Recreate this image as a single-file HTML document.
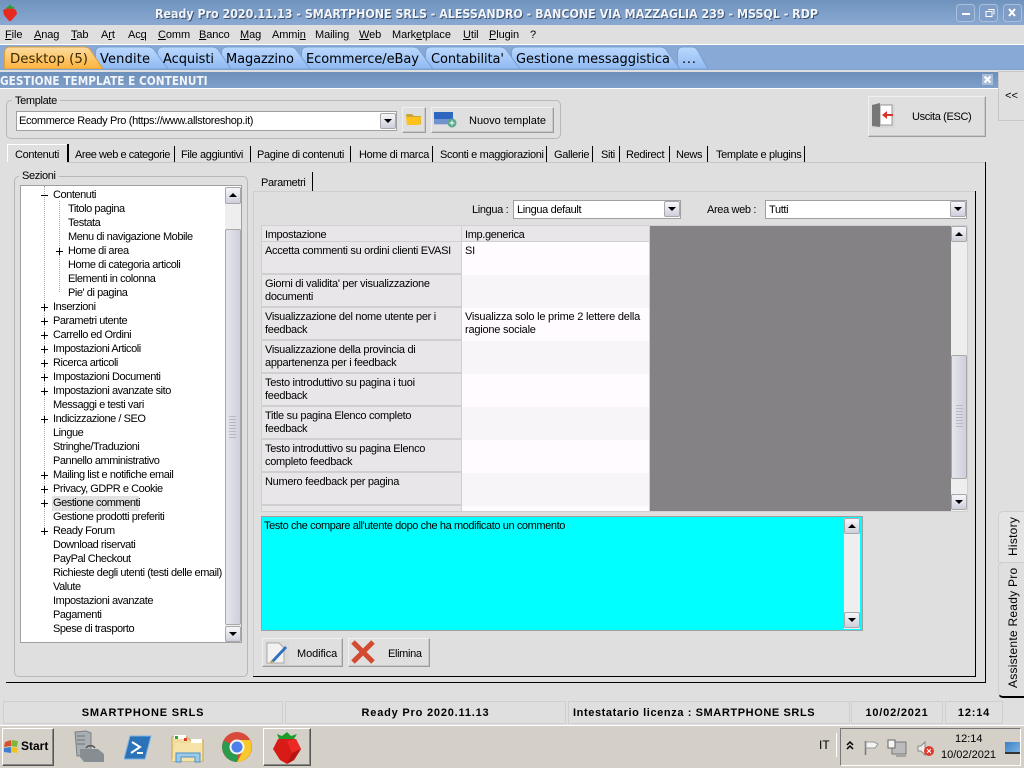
<!DOCTYPE html>
<html><head><meta charset="utf-8"><style>
html,body{margin:0;padding:0}
body{width:1024px;height:768px;overflow:hidden;position:relative;background:#dfdfdf;font:11px "Liberation Sans",sans-serif;color:#000}
div,span{position:absolute;box-sizing:border-box;white-space:nowrap}
.t{line-height:14px;letter-spacing:-.35px}
.tree .t{letter-spacing:-.45px}
.b{background:#dfdfdf;border:1px solid;border-color:#efefef #9c9c9c #9c9c9c #efefef;box-shadow:inset -1px -1px 0 #c8c8c8}
.sb{width:16px;height:16px;background:linear-gradient(#f6f6fa,#cfcfdc);border:1px solid #a8a8a8;border-radius:2px}
.up:after,.dn:after{content:"";position:absolute;left:3px;top:5px;border-left:4px solid transparent;border-right:4px solid transparent}
.up:after{border-bottom:4px solid #000}
.dn:after{border-top:4px solid #000}
.tr{background:#eee;width:16px}
.th{width:16px;background:linear-gradient(90deg,#e6e6ee,#cfcfdc);border:1px solid #a8a8a8;border-radius:2px}
.cb{background:#fff;border:1px solid #a0a0a0}
.g{border:1px solid #b8b8b8;border-radius:5px}
.l{background:#dfdfdf;padding:0 3px;line-height:12px}
.p{width:7px;height:7px}
.p:before{content:"";position:absolute;left:0;top:3px;width:7px;height:1px;background:#000}
.p.pl:after{content:"";position:absolute;left:3px;top:0;width:1px;height:7px;background:#000}
.r1{background:#e8e6e8;border-bottom:2px solid #cfcfcf;left:262px;width:199px;padding:3px 0 0 3px;white-space:normal;line-height:13px;letter-spacing:-.3px}
.r2{left:462px;width:187px;padding:3px 0 0 3px;white-space:normal;line-height:13px;letter-spacing:-.22px}
.st{top:701px;height:23px;border:1px solid #cfcfcf;font-weight:bold;line-height:22px;text-align:center;letter-spacing:.8px}
.sep{width:2px;height:17px;top:145px;background:#000;border-left:1px solid #000}
</style></head><body>

<svg style="position:absolute;left:0;top:0" width="1024" height="72" xmlns="http://www.w3.org/2000/svg">
<defs>
<linearGradient id="tb" x1="0" y1="0" x2="0" y2="1"><stop offset="0" stop-color="#6f93bd"/><stop offset="1" stop-color="#8aa9d2"/></linearGradient>
<linearGradient id="bl" x1="0" y1="0" x2="0" y2="1"><stop offset="0" stop-color="#bcd8fe"/><stop offset="1" stop-color="#8ebaf3"/></linearGradient>
<linearGradient id="or" x1="0" y1="0" x2="0" y2="1"><stop offset="0" stop-color="#fcdca0"/><stop offset="1" stop-color="#fdb23c"/></linearGradient>
</defs>
<rect width="1024" height="25" fill="url(#tb)"/>
<rect y="25" width="1024" height="19" fill="#dfdfdf"/>
<rect y="44" width="1024" height="1" fill="#fff"/>
<rect y="45" width="1024" height="25" fill="#88a8d6"/>
<g stroke="#7aa0d0" stroke-width="1">
<path fill="url(#bl)" d="M677.5 69V53Q677.5 47 683 47H692Q696 47 698 51L708 69Z"/>
<path fill="url(#bl)" d="M511.5 69V53Q511.5 47 517 47H660Q665 47 667 51L680 69Z"/>
<path fill="url(#bl)" d="M425.5 69V53Q425.5 47 431 47H500Q505 47 507 51L520 69Z"/>
<path fill="url(#bl)" d="M301.5 69V53Q301.5 47 307 47H413Q418 47 420 51L433 69Z"/>
<path fill="url(#bl)" d="M221.5 69V53Q221.5 47 227 47H290Q295 47 297 51L310 69Z"/>
<path fill="url(#bl)" d="M157.5 69V53Q157.5 47 163 47H212Q217 47 219 51L231 69Z"/>
<path fill="url(#bl)" d="M95.5 69V53Q95.5 47 101 47H148Q153 47 155 51L168 69Z"/>
<path fill="url(#or)" stroke="#d8a040" d="M4.5 69V53Q4.5 47 10 47H84Q89 47 91 51L103 69Z"/>
</g>
<rect y="69" width="1024" height="1" fill="#7ea2d2"/>
<g font-family="DejaVu Sans,sans-serif" font-size="13" fill="#000">
<text x="10" y="63" textLength="78" lengthAdjust="spacingAndGlyphs" fill="#3a2a00">Desktop (5)</text>
<text x="100" y="63" textLength="50">Vendite</text>
<text x="163" y="63" textLength="51">Acquisti</text>
<text x="226" y="63" textLength="68">Magazzino</text>
<text x="306" y="63" textLength="113">Ecommerce/eBay</text>
<text x="431" y="63" textLength="73">Contabilita'</text>
<text x="516" y="63" textLength="154">Gestione messaggistica</text>
<text x="682" y="63" textLength="14">...</text>
</g>
<g font-family="DejaVu Sans,sans-serif" font-size="12" font-weight="bold">
<text x="156" y="19" textLength="663" lengthAdjust="spacingAndGlyphs" fill="#3c5272">Ready Pro 2020.11.13 - SMARTPHONE SRLS - ALESSANDRO - BANCONE VIA MAZZAGLIA 239 - MSSQL - RDP</text>
<text x="155" y="18" textLength="663" lengthAdjust="spacingAndGlyphs" fill="#f2f4f8">Ready Pro 2020.11.13 - SMARTPHONE SRLS - ALESSANDRO - BANCONE VIA MAZZAGLIA 239 - MSSQL - RDP</text>
</g>
<!-- strawberry -->
<path d="M3 10L10 7L16 10L17 14L11 21L9 21L4 15Z" fill="#e62a20"/>
<path d="M6 8L9 6L10 4L11 6L15 8L10 9Z" fill="#2f9a30"/>
<!-- window buttons -->
<g fill="#7f9dc6" stroke="#a9c0dc"><rect x="956.5" y="4.5" width="18" height="17" rx="3"/><rect x="979.5" y="4.5" width="18" height="17" rx="3"/><rect x="1003.5" y="4.5" width="18" height="17" rx="3"/></g>
<rect x="962" y="13" width="8" height="2" fill="#fff"/>
<path d="M986 11.5h6v5h-6zM988 9.5h6v5" fill="none" stroke="#fff"/>
<path d="M1009 9l6 7M1015 9l-6 7" stroke="#fff" stroke-width="2"/>
</svg>

<div class="t" style="left:0;top:28px;width:600px;height:14px;letter-spacing:-.1px">
<span style="left:5px"><u>F</u>ile</span><span style="left:34px"><u>A</u>nag</span><span style="left:71px"><u>T</u>ab</span><span style="left:101px">A<u>r</u>t</span><span style="left:128px">Ac<u>q</u></span><span style="left:158px"><u>C</u>omm</span><span style="left:199px"><u>B</u>anco</span><span style="left:240px"><u>M</u>ag</span><span style="left:272px">Ammi<u>n</u></span><span style="left:315px">Mailin<u>g</u></span><span style="left:359px"><u>W</u>eb</span><span style="left:392px">Mark<u>e</u>tplace</span><span style="left:463px"><u>U</u>til</span><span style="left:489px"><u>P</u>lugin</span><span style="left:530px">?</span>
</div>

<!-- caption -->
<div style="left:0;top:72px;width:998px;height:17px;background:linear-gradient(#6c90bb,#7f9fc9);border-bottom:1px solid #fff"></div>
<div style="left:0;top:74px;color:#f2f4f8;font:bold 12px/14px 'DejaVu Sans',sans-serif;width:208px;transform-origin:0 0;transform:scaleX(.88)">GESTIONE TEMPLATE E CONTENUTI</div>
<svg style="position:absolute;left:982px;top:74px" width="12" height="12"><rect width="11" height="11" fill="#a9bddb"/><path d="M2.500 2.500l6 6M8.500 2.500l-6 6" stroke="#fff" stroke-width="2"/></svg>
<div style="left:998px;top:71px;width:26px;height:50px;border:1px solid #c8c8c8;border-right:0;line-height:48px;text-align:center;font-size:11px">&lt;&lt;</div>

<!-- template group -->
<div class="g" style="left:6px;top:100px;width:555px;height:39px"></div>
<div class="l t" style="left:12px;top:95px">Template</div>
<div class="cb t" style="left:16px;top:111px;width:381px;height:20px;padding:2px 0 0 2px">Ecommerce Ready Pro (https://www.allstoreshop.it)</div>
<div class="sb dn" style="left:380px;top:113px"></div>
<div class="b" style="left:402px;top:107px;width:24px;height:26px"></div>
<svg style="position:absolute;left:405px;top:111px" width="18" height="16"><path d="M1 3h6l2 2h7v8H2z" fill="#c9a53c"/><path d="M1 6h15l-1 8H2z" fill="#ffc21c"/></svg>
<div class="b" style="left:431px;top:107px;width:123px;height:26px"></div>
<svg style="position:absolute;left:434px;top:111px" width="26" height="18"><rect x="0" y="1" width="19" height="7" fill="#2f66c0"/><rect x="0" y="8" width="19" height="5" fill="#6f93cf"/><rect x="0" y="13" width="19" height="1" fill="#c9c0e0"/><circle cx="18" cy="12" r="4.500" fill="#5aa78c"/><path d="M15.500 12h5M18 9.500v5" stroke="#fff"/></svg>
<div class="t" style="left:469px;top:114px;letter-spacing:0">Nuovo template</div>

<!-- uscita -->
<div class="b" style="left:868px;top:96px;width:118px;height:41px"></div>
<svg style="position:absolute;left:872px;top:102px" width="24" height="26"><rect x="0" y="2" width="23" height="24" fill="#d8d8d8"/><rect x="8" y="3" width="12" height="20" fill="#fff" stroke="#999"/><path d="M0 3l8-2v24l-8-1z" fill="#777"/><path d="M10 13l5-4v3h6v2h-6v3z" fill="#d8342a"/></svg>
<div class="t" style="left:912px;top:110px">Uscita (ESC)</div>

<!-- tabs -->
<div class="t" style="left:15px;top:148px">Contenuti</div>
<div class="t" style="left:75px;top:148px;letter-spacing:-.45px">Aree web e categorie</div>
<div class="t" style="left:181px;top:148px">File aggiuntivi</div>
<div class="t" style="left:257px;top:148px">Pagine di contenuti</div>
<div class="t" style="left:359px;top:148px">Home di marca</div>
<div class="t" style="left:440px;top:148px">Sconti e maggiorazioni</div>
<div class="t" style="left:554px;top:148px">Gallerie</div>
<div class="t" style="left:601px;top:148px">Siti</div>
<div class="t" style="left:626px;top:148px">Redirect</div>
<div class="t" style="left:676px;top:148px">News</div>
<div class="t" style="left:716px;top:148px">Template e plugins</div>
<div style="left:7px;top:144px;width:60px;height:1px;background:#fff"></div>
<div style="left:7px;top:144px;width:1px;height:18px;background:#fff"></div>
<div class="sep" style="left:67px;top:144px;height:19px"></div>
<div class="sep" style="left:174px;top:146px;width:1px;height:16px"></div>
<div class="sep" style="left:250px;top:146px;width:1px;height:16px"></div>
<div class="sep" style="left:350px;top:146px;width:1px;height:16px"></div>
<div class="sep" style="left:432px;top:146px;width:1px;height:16px"></div>
<div class="sep" style="left:546px;top:146px;width:1px;height:16px"></div>
<div class="sep" style="left:592px;top:146px;width:1px;height:16px"></div>
<div class="sep" style="left:619px;top:146px;width:1px;height:16px"></div>
<div class="sep" style="left:669px;top:146px;width:1px;height:16px"></div>
<div class="sep" style="left:707px;top:146px;width:1px;height:16px"></div>
<div class="sep" style="left:804px;top:146px;width:1px;height:16px"></div>
<div style="left:67px;top:162px;width:918px;height:1px;background:#c8c8c8"></div>
<div style="left:985px;top:162px;width:1px;height:521px;background:#000"></div>
<div style="left:6px;top:682px;width:980px;height:1px;background:#000"></div>

<!-- sezioni -->
<div class="g" style="left:14px;top:176px;width:234px;height:501px"></div>
<div class="l t" style="left:19px;top:170px">Sezioni</div>
<div style="left:20px;top:185px;width:222px;height:458px;background:#fff;border:1px solid #a0a0a0"></div>
<div style="left:44px;top:186px;height:344px;width:0;border-left:1px dotted #aaa"></div>
<div style="left:59px;top:201px;height:91px;width:0;border-left:1px dotted #aaa"></div>
<div class="tree" style="left:0;top:1px;width:0;height:0">
<div style="left:52px;top:495px;width:87px;height:15px;background:#e2e2e2"></div>
<div class="t" style="left:53px;top:187px">Contenuti</div><span class="p" style="left:41px;top:191px"></span>
<div class="t" style="left:68px;top:201px">Titolo pagina</div>
<div class="t" style="left:68px;top:215px">Testata</div>
<div class="t" style="left:68px;top:229px">Menu di navigazione Mobile</div>
<div class="t" style="left:68px;top:243px">Home di area</div><span class="p pl" style="left:56px;top:247px"></span>
<div class="t" style="left:68px;top:257px">Home di categoria articoli</div>
<div class="t" style="left:68px;top:271px">Elementi in colonna</div>
<div class="t" style="left:68px;top:285px">Pie' di pagina</div>
<div class="t" style="left:53px;top:299px">Inserzioni</div><span class="p pl" style="left:41px;top:303px"></span>
<div class="t" style="left:53px;top:313px">Parametri utente</div><span class="p pl" style="left:41px;top:317px"></span>
<div class="t" style="left:53px;top:327px">Carrello ed Ordini</div><span class="p pl" style="left:41px;top:331px"></span>
<div class="t" style="left:53px;top:341px">Impostazioni Articoli</div><span class="p pl" style="left:41px;top:345px"></span>
<div class="t" style="left:53px;top:355px">Ricerca articoli</div><span class="p pl" style="left:41px;top:359px"></span>
<div class="t" style="left:53px;top:369px">Impostazioni Documenti</div><span class="p pl" style="left:41px;top:373px"></span>
<div class="t" style="left:53px;top:383px">Impostazioni avanzate sito</div><span class="p pl" style="left:41px;top:387px"></span>
<div class="t" style="left:53px;top:397px">Messaggi e testi vari</div>
<div class="t" style="left:53px;top:411px">Indicizzazione / SEO</div><span class="p pl" style="left:41px;top:415px"></span>
<div class="t" style="left:53px;top:425px">Lingue</div>
<div class="t" style="left:53px;top:439px">Stringhe/Traduzioni</div>
<div class="t" style="left:53px;top:453px">Pannello amministrativo</div>
<div class="t" style="left:53px;top:467px">Mailing list e notifiche email</div><span class="p pl" style="left:41px;top:471px"></span>
<div class="t" style="left:53px;top:481px">Privacy, GDPR e Cookie</div><span class="p pl" style="left:41px;top:485px"></span>
<div class="t" style="left:53px;top:495px">Gestione commenti</div><span class="p pl" style="left:41px;top:499px"></span>
<div class="t" style="left:53px;top:509px">Gestione prodotti preferiti</div>
<div class="t" style="left:53px;top:523px">Ready Forum</div><span class="p pl" style="left:41px;top:527px"></span>
<div class="t" style="left:53px;top:537px">Download riservati</div>
<div class="t" style="left:53px;top:551px">PayPal Checkout</div>
<div class="t" style="left:53px;top:565px">Richieste degli utenti (testi delle email)</div>
<div class="t" style="left:53px;top:579px">Valute</div>
<div class="t" style="left:53px;top:593px">Impostazioni avanzate</div>
<div class="t" style="left:53px;top:607px">Pagamenti</div>
<div class="t" style="left:53px;top:621px">Spese di trasporto</div>
</div>
<div class="tr" style="left:225px;top:187px;height:455px"></div>
<div class="sb up" style="left:225px;top:187px;height:17px"></div>
<div class="th" style="left:225px;top:229px;height:396px"></div>
<div class="sb dn" style="left:225px;top:626px"></div>

<!-- parametri -->
<div style="left:253px;top:191px;width:722px;height:1px;background:#cfcfcf"></div>
<div style="left:253px;top:191px;width:1px;height:486px;background:#cfcfcf"></div>
<div style="left:253px;top:676px;width:723px;height:1px;background:#000"></div>
<div style="left:975px;top:191px;width:1px;height:486px;background:#000"></div>
<div style="left:312px;top:172px;width:1px;height:19px;background:#000"></div>
<div class="t" style="left:261px;top:176px">Parametri</div>
<div class="t" style="left:472px;top:203px">Lingua :</div>
<div class="cb t" style="left:513px;top:200px;width:168px;height:19px;padding:2px 0 0 3px">Lingua default</div>
<div class="sb dn" style="left:664px;top:201px"></div>
<div class="t" style="left:707px;top:203px">Area web :</div>
<div class="cb t" style="left:765px;top:200px;width:202px;height:19px;padding:2px 0 0 3px">Tutti</div>
<div class="sb dn" style="left:950px;top:201px"></div>

<!-- grid -->
<div style="left:261px;top:225px;width:707px;height:287px;background:#d0d0d0"></div>
<div style="left:650px;top:226px;width:301px;height:285px;background:#858285"></div>
<div class="t" style="left:262px;top:226px;width:199px;height:15px;background:#e8e6e8;padding:2px 0 0 3px">Impostazione</div>
<div class="t" style="left:462px;top:226px;width:187px;height:15px;background:#e8e6e8;padding:2px 0 0 3px">Imp.generica</div>
<div class="r1" style="top:242px;height:33px">Accetta commenti su ordini clienti EVASI</div>
<div class="r2" style="top:242px;height:33px;background:#fffbff">SI</div>
<div class="r1" style="top:275px;height:33px">Giorni di validita' per visualizzazione<br>documenti</div>
<div class="r2" style="top:275px;height:33px;background:#f7f5f7"></div>
<div class="r1" style="top:308px;height:33px">Visualizzazione del nome utente per i<br>feedback</div>
<div class="r2" style="top:308px;height:33px;background:#fffbff">Visualizza solo le prime 2 lettere della<br>ragione sociale</div>
<div class="r1" style="top:341px;height:33px">Visualizzazione della provincia di<br>appartenenza per i feedback</div>
<div class="r2" style="top:341px;height:33px;background:#f7f5f7"></div>
<div class="r1" style="top:374px;height:33px">Testo introduttivo su pagina i tuoi<br>feedback</div>
<div class="r2" style="top:374px;height:33px;background:#fffbff"></div>
<div class="r1" style="top:407px;height:33px">Title su pagina Elenco completo<br>feedback</div>
<div class="r2" style="top:407px;height:33px;background:#f7f5f7"></div>
<div class="r1" style="top:440px;height:33px">Testo introduttivo su pagina Elenco<br>completo feedback</div>
<div class="r2" style="top:440px;height:33px;background:#fffbff"></div>
<div class="r1" style="top:473px;height:33px">Numero feedback per pagina</div>
<div class="r2" style="top:473px;height:33px;background:#f7f5f7"></div>
<div class="r1" style="top:506px;height:5px;padding:0;border:0"></div>
<div class="r2" style="top:506px;height:5px;padding:0;background:#fffbff"></div>
<div class="tr" style="left:951px;top:226px;height:285px"></div>
<div class="sb up" style="left:951px;top:226px"></div>
<div class="th" style="left:951px;top:355px;height:124px"></div>
<div class="sb dn" style="left:951px;top:494px"></div>
<div style="left:956px;top:405px;width:7px;height:22px;background:repeating-linear-gradient(#b8b8c4 0 1px,transparent 1px 3px)"></div>
<div style="left:229px;top:416px;width:7px;height:22px;background:repeating-linear-gradient(#b8b8c4 0 1px,transparent 1px 3px)"></div>

<!-- memo -->
<div style="left:261px;top:516px;width:602px;height:115px;background:#0ff;border:1px solid #a0a0a0"></div>
<div class="t" style="left:264px;top:519px;letter-spacing:-.4px">Testo che compare all'utente dopo che ha modificato un commento</div>
<div class="tr" style="left:844px;top:518px;height:111px"></div>
<div class="sb up" style="left:844px;top:518px"></div>
<div class="sb dn" style="left:844px;top:612px"></div>

<!-- buttons -->
<div class="b" style="left:262px;top:638px;width:81px;height:29px"></div>
<svg style="position:absolute;left:265px;top:641px" width="24" height="24"><rect x="0" y="0" width="24" height="24" fill="#dadada"/><path d="M2 2h12l5 5v15H2z" fill="#f2f2f2" stroke="#aaa"/><path d="M6 20L20 5l2 2L9 21z" fill="#2f6fc0"/><path d="M5 22l1-3 3 2z" fill="#c9a53c"/></svg>
<div class="t" style="left:297px;top:647px;letter-spacing:-.1px">Modifica</div>
<div class="b" style="left:348px;top:638px;width:82px;height:29px"></div>
<svg style="position:absolute;left:351px;top:640px" width="24" height="25"><path d="M2 2L22 22M22 2L2 22" stroke="#d24a30" stroke-width="5"/></svg>
<div class="t" style="left:388px;top:647px">Elimina</div>

<!-- side tabs -->
<div style="left:998px;top:511px;width:26px;height:52px;background:#e4e4e4;border:1px solid #cfcfcf;border-right:0;border-radius:5px 0 0 0"></div>
<div style="left:998px;top:562px;width:26px;height:136px;background:#dfdfdf;border:1px solid #cfcfcf;border-bottom:2px solid #000;border-right:0;border-radius:5px 0 0 5px"></div>
<div style="left:1006px;top:556px;font-size:12px;line-height:14px;letter-spacing:.25px;transform-origin:0 0;transform:rotate(-90deg)">History</div>
<div style="left:1006px;top:688px;font-size:12px;line-height:14px;letter-spacing:.25px;transform-origin:0 0;transform:rotate(-90deg)">Assistente Ready Pro</div>

<!-- status -->
<div class="st" style="left:3px;width:280px">SMARTPHONE SRLS</div>
<div class="st" style="left:285px;width:281px">Ready Pro 2020.11.13</div>
<div class="st" style="left:568px;width:282px;text-align:left;padding-left:4px;letter-spacing:.6px">Intestatario licenza : SMARTPHONE SRLS</div>
<div class="st" style="left:851px;width:92px">10/02/2021</div>
<div class="st" style="left:945px;width:58px">12:14</div>

<!-- taskbar -->
<div style="left:0;top:725px;width:1024px;height:1px;background:#fff"></div>
<div style="left:0;top:726px;width:1024px;height:42px;background:#d4d0c8"></div>
<div style="left:2px;top:728px;width:52px;height:38px;background:#d4d0c8;border:1px solid;border-color:#fff #555 #555 #fff;box-shadow:inset -1px -1px 0 #888"></div>
<svg style="position:absolute;left:4px;top:739px" width="16" height="15"><path d="M1 3l6-2v6l-7 1z" fill="#d8502c"/><path d="M8 1l6 1-1 6-6-1z" fill="#7fb63a"/><path d="M0 9l7-1v6l-7-1z" fill="#3f7fd0"/><path d="M8 8l6 1-1 5-6-1z" fill="#f2c21c"/></svg>
<div style="left:21px;top:739px;font:bold 12px/14px 'Liberation Sans',sans-serif">Start</div>
<svg style="position:absolute;left:72px;top:730px" width="32" height="34"><path d="M3 2l11-1 5 2v22l-14 1z" fill="#a9aeb3" stroke="#7b8085"/><path d="M5 6h8M5 10h8M5 14h8" stroke="#6c7176"/><path d="M8 19l18 0 6 5v8H12l-4-5z" fill="#868d93"/><path d="M14 18a5 4 0 0 1 9 0" fill="none" stroke="#555" stroke-width="1.500"/></svg>
<svg style="position:absolute;left:124px;top:735px" width="28" height="25"><path d="M6 1H27L21 24H0z" fill="#2b72b8" stroke="#7ab4e4"/><path d="M8 7l8 5-9 6M13 18h6" fill="none" stroke="#fff" stroke-width="2"/></svg>
<svg style="position:absolute;left:171px;top:733px" width="33" height="30"><path d="M1 4h15l3 3h13v21H1z" fill="#f2db9a" stroke="#c9a85a"/><rect x="3" y="2" width="12" height="4" fill="#fff"/><rect x="4" y="3" width="3" height="3" fill="#2fa32f"/><rect x="13" y="5" width="3" height="3" fill="#d83a2a"/><rect x="20" y="6" width="11" height="4" fill="#fff"/><path d="M4 10h27v18H1z" fill="#f6e3a8"/><path d="M5 20h24v9h-5v-5H10v5H5z" fill="#9ccbea" stroke="#4a92c8"/></svg>
<svg style="position:absolute;left:222px;top:732px" width="30" height="30"><circle cx="15" cy="15" r="15" fill="#d84a3a"/><path d="M15 15L2 22A15 15 0 0 0 15 30Z" fill="#2a9a4e"/><path d="M15 15L2 22A15 15 0 0 1 1.500 8.500Z" fill="#2a9a4e"/><path d="M15 8H28A15 15 0 0 1 15 30L21 19Z" fill="#f8c92a"/><circle cx="15" cy="15" r="7.500" fill="#f4f4f4"/><circle cx="15" cy="15" r="5.500" fill="#4a80ec"/></svg>
<div style="left:263px;top:728px;width:48px;height:38px;background:#d4d0c8;border:1px solid;border-color:#fff #555 #555 #fff;box-shadow:inset -1px -1px 0 #888"></div>
<svg style="position:absolute;left:272px;top:731px" width="30" height="33"><path d="M5 3l5 2 5-4 4 4 6-2-3 5H7z" fill="#1f9a2c"/><path d="M6 8H24L29 18 22 29 15 33 8 29 1 18Z" fill="#d91b18"/><path d="M15 10L24 8 29 18 20 22Z" fill="#ee2a24"/><path d="M15 33L20 22 29 18 22 29Z" fill="#b81410"/></svg>
<div style="left:819px;top:738px;font-size:12px;line-height:14px">IT</div>
<div style="left:836px;top:733px;width:1px;height:24px;background:#aaa;border-right:1px solid #fff"></div>
<div style="left:840px;top:728px;width:181px;height:38px;border:1px solid;border-color:#777 #fff #fff #777"></div>
<svg style="position:absolute;left:846px;top:738px" width="100" height="20"><path d="M1 7l3-3 3 3M1 11l3-3 3 3" fill="none" stroke="#000" stroke-width="1.500"/>
<path d="M19.500 3v14" stroke="#777" stroke-width="1.500"/><path d="M20 4h8l4 2-3 4h-9z" fill="#f4f4f4" stroke="#999"/>
<rect x="46" y="4" width="14" height="12" fill="#bbb" stroke="#777"/><rect x="42" y="2" width="7" height="8" fill="#f4f4f4" stroke="#666"/><path d="M50 18h10" stroke="#777"/>
<path d="M72 8h3l4-4v13l-4-4h-3z" fill="#eee" stroke="#888"/><circle cx="83" cy="13" r="5" fill="#e03a2e"/><path d="M81 11l4 4M85 11l-4 4" stroke="#fff"/></svg>
<div style="left:955px;top:732px;font-size:11px;line-height:14px">12:14</div>
<div style="left:941px;top:748px;font-size:11px;line-height:14px">10/02/2021</div>
<div style="left:1005px;top:742px;width:15px;height:12px;background:linear-gradient(135deg,#3b7fc4,#7ab3e0);border-bottom:2px solid #333"></div>

</body></html>
